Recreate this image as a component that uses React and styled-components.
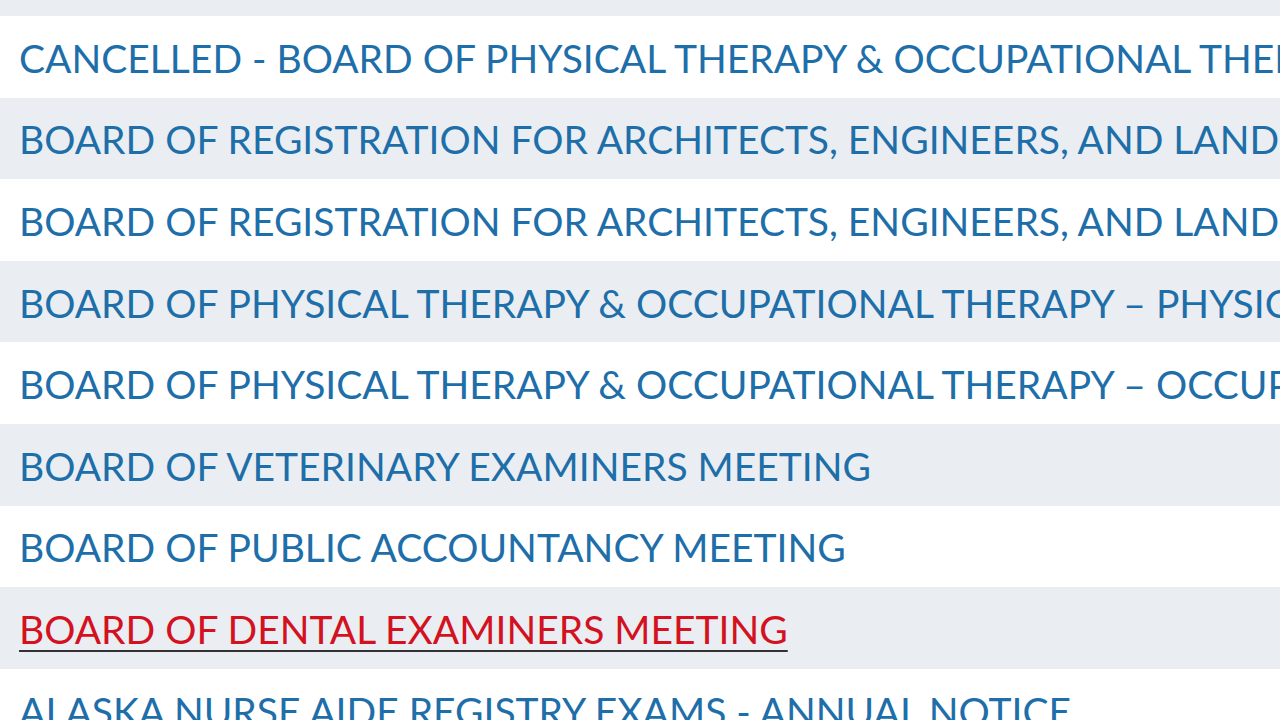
import React from "react";
import styled, { createGlobalStyle } from "styled-components";

const GlobalStyle = createGlobalStyle`
  html, body {
    margin: 0;
    padding: 0;
    background: #ffffff;
    overflow: hidden;
  }
`;

const meetings = [
  "BOARD OF NURSING MEETING",
  "CANCELLED - BOARD OF PHYSICAL THERAPY & OCCUPATIONAL THERAPY MEETING",
  "BOARD OF REGISTRATION FOR ARCHITECTS, ENGINEERS, AND LAND SURVEYORS MEETING",
  "BOARD OF REGISTRATION FOR ARCHITECTS, ENGINEERS, AND LAND SURVEYORS WORK SESSION",
  "BOARD OF PHYSICAL THERAPY & OCCUPATIONAL THERAPY – PHYSICAL THERAPY EXAM",
  "BOARD OF PHYSICAL THERAPY & OCCUPATIONAL THERAPY – OCCUPATIONAL THERAPY EXAM",
  "BOARD OF VETERINARY EXAMINERS MEETING",
  "BOARD OF PUBLIC ACCOUNTANCY MEETING",
  "BOARD OF DENTAL EXAMINERS MEETING",
  "ALASKA NURSE AIDE REGISTRY EXAMS - ANNUAL NOTICE",
];

// list is scrolled so only the bottom 16px of the first row shows
const List = styled.ul`
  list-style: none;
  margin: -65.6px 0 0 0;
  padding: 0;
  width: 100%;
`;

const Row = styled.li`
  display: flex;
  align-items: center;
  box-sizing: border-box;
  height: 81.6px;
  padding: 3px 0 0 19px;
  background: ${(p) => (p.$shaded ? "#eaeef2" : "#ffffff")};
  white-space: nowrap;
  overflow: hidden;
`;

const Title = styled.a`
  font-family: Lato, "Open Sans", sans-serif;
  font-size: 39px;
  font-weight: 400;
  line-height: 1;
  color: ${(p) => (p.$active ? "#d3111f" : "#1d6ea9")};
  text-decoration: ${(p) => (p.$active ? "underline" : "none")};
  text-decoration-color: #333333;
  text-decoration-thickness: 2px;
  text-underline-offset: 6px;
  cursor: pointer;
`;

export default function App() {
  return (
    <>
      <GlobalStyle />
      <List>
        {meetings.map((m, i) => (
          <Row key={i} $shaded={i % 2 === 0}>
            <Title $active={m === "BOARD OF DENTAL EXAMINERS MEETING"}>{m}</Title>
          </Row>
        ))}
      </List>
    </>
  );
}
